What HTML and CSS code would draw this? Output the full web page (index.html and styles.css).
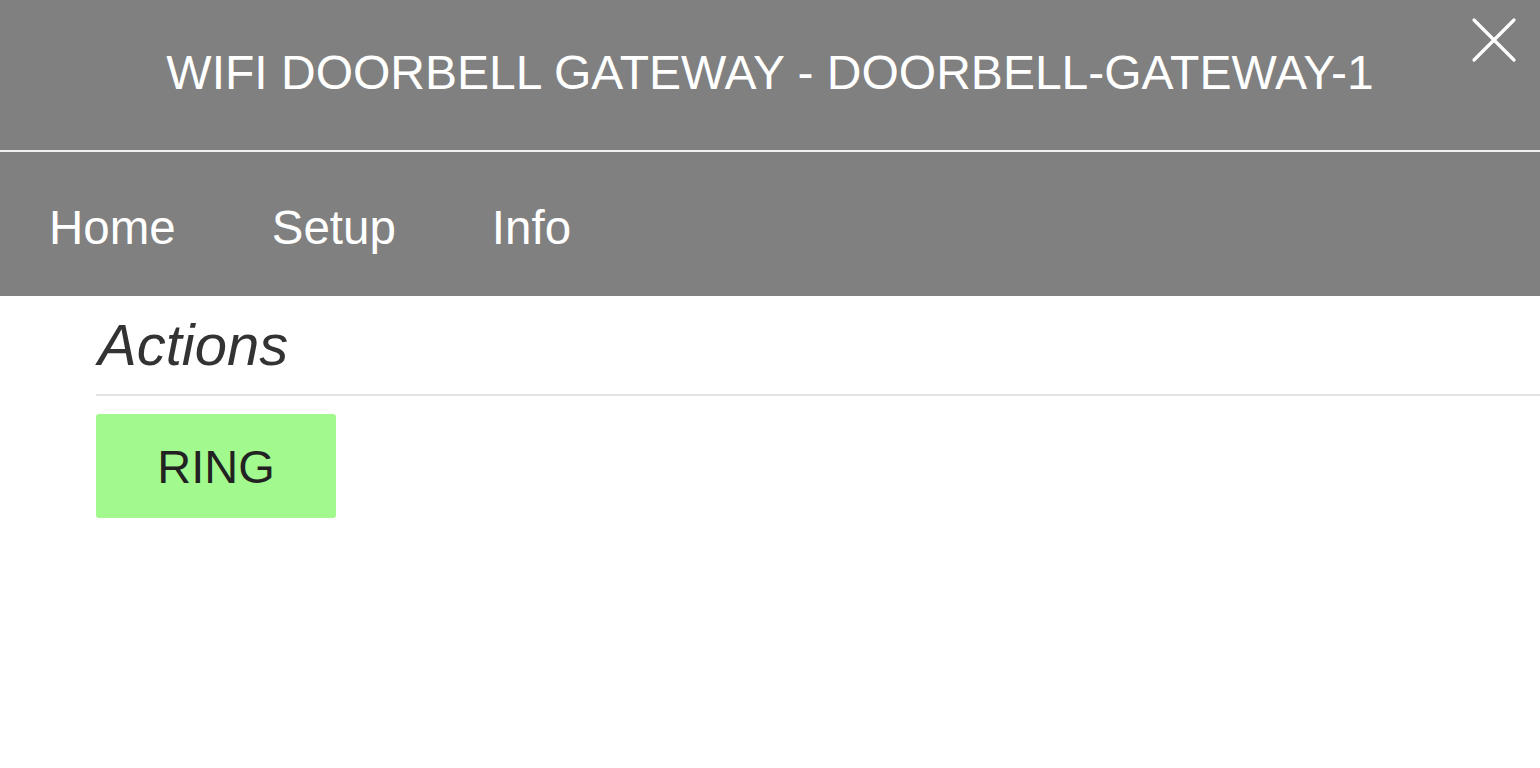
FILE: index.html
```html
<!DOCTYPE html>
<html>
<head>
<meta charset="utf-8">
<link rel="stylesheet" href="styles.css">
</head>
<body>
<header class="titlebar">
  <h1 class="title">WIFI DOORBELL GATEWAY - DOORBELL-GATEWAY-1</h1>
  <button class="close" aria-label="Close">
    <svg width="46" height="46" viewBox="0 0 46 46"><path d="M3 3L43 43M43 3L3 43" stroke="#fff" stroke-width="3.2" stroke-linecap="round"/></svg>
  </button>
</header>
<nav class="nav">
  <a class="nav-item">Home</a>
  <a class="nav-item">Setup</a>
  <a class="nav-item">Info</a>
</nav>
<main class="content">
  <h2 class="section-title">Actions</h2>
  <div class="actions">
    <button class="ring">RING</button>
  </div>
</main>
</body>
</html>
```
FILE: styles.css
```css
html, body {
  margin: 0;
  padding: 0;
  background: #fff;
  font-family: "Liberation Sans", Arial, sans-serif;
}
.titlebar {
  position: relative;
  box-sizing: border-box;
  height: 152px;
  padding-bottom: 6px;
  background: #808080;
  border-bottom: 2px solid #f0f0f0;
  display: flex;
  align-items: center;
  justify-content: center;
}
.title {
  margin: 0;
  color: #fff;
  font-weight: normal;
  font-size: 48px;
}
.close {
  position: absolute;
  top: 17px;
  right: 23px;
  background: none;
  border: 0;
  padding: 0;
  width: 46px;
  height: 46px;
}
.nav {
  box-sizing: border-box;
  height: 144px;
  padding-top: 6px;
  background: #808080;
  display: flex;
  align-items: center;
  padding-left: 49px;
  gap: 96px;
}
.nav-item {
  color: #fff;
  font-size: 47.5px;
}
.content {
  padding-left: 96px;
}
.section-title {
  margin: 0;
  padding: 14px 0 14px 2px;
  font-style: italic;
  font-weight: normal;
  font-size: 58px;
  line-height: 70px;
  color: #333;
  border-bottom: 2px solid #e3e3e3;
}
.actions {
  padding-top: 18px;
}
.ring {
  width: 240px;
  height: 104px;
  background: #a2fa8e;
  border: 0;
  border-radius: 3px;
  font-family: "Liberation Sans", Arial, sans-serif;
  font-size: 47px;
  color: #222;
  padding: 0;
}
```
